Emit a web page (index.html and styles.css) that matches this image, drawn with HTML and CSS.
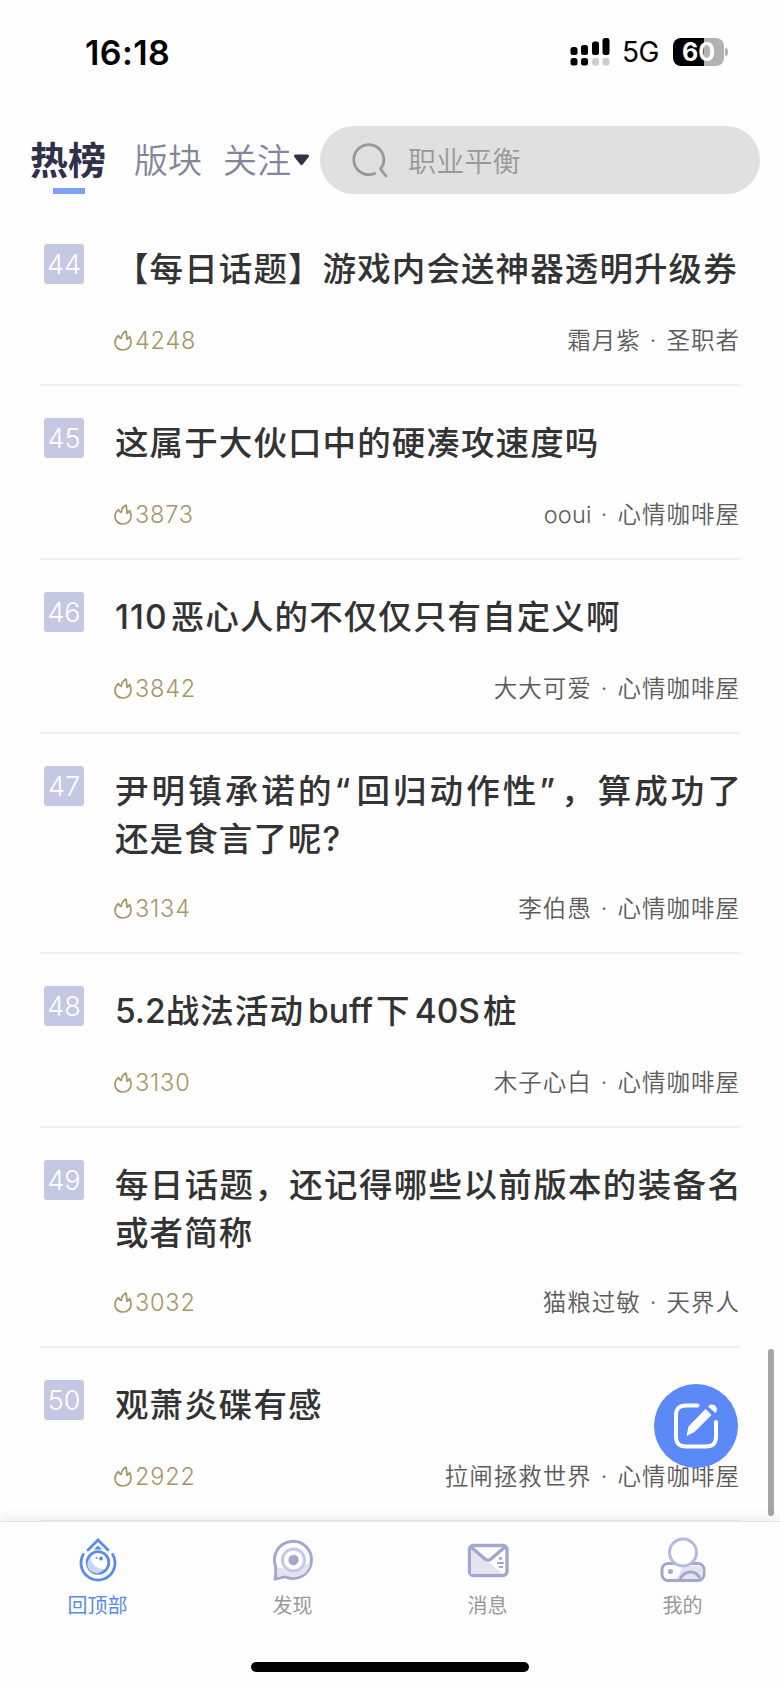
FILE: index.html
```html
<!DOCTYPE html>
<html lang="zh-CN">

<head>
    <meta charset="UTF-8">
    <meta name="viewport" content="width=device-width, initial-scale=1.0">
    <title>热榜</title>
    <link rel="stylesheet" href="styles.css">
</head>

<body>
    <svg class="defs" width="0" height="0">
        <symbol id="flame" viewBox="0 0 18 21">
            <path d="M4.500 5.500C1.500 8 1 10.500 1 13c0 4 3.500 7 8 7s8-3 8-7.500c0-2-.3-4-1.200-6-.8 1.500-1.500 2-2.800 2.800C13 6 12.500 3.500 12 1 9 2.500 7.500 5 7.300 8.500 5.800 8 4.800 7 4.500 5.500z" fill="none" stroke="currentColor" stroke-width="1.700" stroke-linejoin="round" />
        </symbol>
    </svg>

    <div class="status">
        <div class="time">16:18</div>
        <div class="status-right">
            <svg class="signal" width="40" height="28" viewBox="0 0 40 28">
                <rect x="0.500" y="9" width="7" height="8" rx="2.500" />
                <rect x="11" y="7" width="7" height="10" rx="2.500" />
                <rect x="22" y="3.500" width="7" height="13.500" rx="2.500" />
                <rect x="32.500" y="0" width="7" height="17" rx="2.500" />
                <rect x="0.500" y="20" width="7" height="7.500" rx="2.500" />
                <rect x="11" y="20" width="7" height="7.500" rx="2.500" />
                <rect x="22" y="20" width="7" height="7.500" rx="2.500" fill="#ccc" />
                <rect x="32.500" y="20" width="7" height="7.500" rx="2.500" fill="#ccc" />
            </svg>
            <span class="network">5G</span>
            <span class="battery">60</span>
            <span class="battery-tip"></span>
        </div>
    </div>

    <div class="header">
        <div class="tab active">热榜</div>
        <div class="tab">版块</div>
        <div class="tab follow">关注</div>
        <svg class="caret" width="17" height="12" viewBox="0 0 17 12">
            <path d="M2.500 2h12L8.500 9.500z" fill="#303048" stroke="#303048" stroke-width="3" stroke-linejoin="round" />
        </svg>
        <div class="search">
            <svg width="36" height="37" viewBox="0 0 36 37">
                <path d="M22.500 31.500A15 15 0 1 1 28.500 27L34 34" fill="none" stroke="#999" stroke-width="2.800" stroke-linecap="round" stroke-linejoin="round" />
            </svg>
            <span>职业平衡</span>
        </div>
    </div>

    <div class="list">
        <div class="item">
            <div class="rank">44</div>
            <div class="content">
                <div class="title">【每日话题】游戏内会送神器透明升级券</div>
                <div class="meta">
                    <span class="heat"><svg><use href="#flame" /></svg>4248</span>
                    <span class="from">霜月紫 · 圣职者</span>
                </div>
            </div>
        </div>
        <div class="item">
            <div class="rank">45</div>
            <div class="content">
                <div class="title">这属于大伙口中的硬凑攻速度吗</div>
                <div class="meta">
                    <span class="heat"><svg><use href="#flame" /></svg>3873</span>
                    <span class="from"><span class="user">ooui</span> · 心情咖啡屋</span>
                </div>
            </div>
        </div>
        <div class="item">
            <div class="rank">46</div>
            <div class="content">
                <div class="title"><span class="num">110</span>恶心人的不仅仅只有自定义啊</div>
                <div class="meta">
                    <span class="heat"><svg><use href="#flame" /></svg>3842</span>
                    <span class="from">大大可爱 · 心情咖啡屋</span>
                </div>
            </div>
        </div>
        <div class="item">
            <div class="rank">47</div>
            <div class="content">
                <div class="title two-line">尹明镇承诺的<span class="quote">“</span>回归动作性<span class="quote">”</span>，算成功了还是食言了呢?</div>
                <div class="meta">
                    <span class="heat"><svg><use href="#flame" /></svg>3134</span>
                    <span class="from">李伯愚 · 心情咖啡屋</span>
                </div>
            </div>
        </div>
        <div class="item">
            <div class="rank">48</div>
            <div class="content">
                <div class="title"><span class="latin first">5.2</span>战法活动<span class="latin">buff</span>下<span class="latin">40S</span>桩</div>
                <div class="meta">
                    <span class="heat"><svg><use href="#flame" /></svg>3130</span>
                    <span class="from">木子心白 · 心情咖啡屋</span>
                </div>
            </div>
        </div>
        <div class="item">
            <div class="rank">49</div>
            <div class="content">
                <div class="title two-line">每日话题，还记得哪些以前版本的装备名或者简称</div>
                <div class="meta">
                    <span class="heat"><svg><use href="#flame" /></svg>3032</span>
                    <span class="from">猫粮过敏 · 天界人</span>
                </div>
            </div>
        </div>
        <div class="item">
            <div class="rank">50</div>
            <div class="content">
                <div class="title">观萧炎碟有感</div>
                <div class="meta">
                    <span class="heat"><svg><use href="#flame" /></svg>2922</span>
                    <span class="from">拉闸拯救世界 · 心情咖啡屋</span>
                </div>
            </div>
        </div>
    </div>

    <div class="post">
        <svg width="84" height="84" viewBox="0 0 84 84" fill="none" stroke="#fff" stroke-width="4" stroke-linecap="round">
            <path d="M43.500 21.500H32c-7 0-10 3-10 10v21c0 7 3 10 10 10h20c7 0 10-3 10-10V38" />
            <path d="M32.500 52l2-9.500 17-17.500 6 6L40.500 48z" fill="#fff" stroke="none" />
            <path d="M54 22.500c4.500-5.500 12 1 7.500 6.500z" fill="#fff" stroke="none" />
        </svg>
    </div>
    <div class="scrollbar"></div>

    <div class="tabbar">
        <div class="nav active">
            <svg width="48" height="48" viewBox="0 0 48 48" fill="none" stroke="#5b8bea" stroke-width="2.800" stroke-linecap="round">
                <path d="M14 14L24 4l10 10" />
                <path d="M9.300 18.500a17 17 0 1 0 29.400 0" />
                <path d="M20 13.500l4-4 4 4z" fill="#5b8bea" stroke="none" />
                <circle cx="24" cy="26.500" r="10.800" fill="#fff" />
                <path d="M17 21a9 9 0 1 0 13 12C22 33 17 28 17 21z" fill="#ccd5f5" stroke="none" />
                <circle cx="27" cy="22.500" r="1.900" fill="#5b8bea" stroke="none" />
                <circle cx="22.500" cy="22" r="1" fill="#5b8bea" stroke="none" />
            </svg>
            <span>回顶部</span>
        </div>
        <div class="nav">
            <svg width="48" height="48" viewBox="0 0 48 48" fill="none" stroke="#a2a8cd" stroke-width="3">
                <path d="M6 43c1.500-5 1.200-8 .5-13A18.500 18.500 0 1 1 17 41c-4-.5-6 1.500-11 2z" fill="#fff" stroke-linejoin="round" />
                <path d="M8 41V31c8 3 20 2 33-4-1 12-14 17-24 12-3 0-5 1.500-9 2z" fill="#e2e5ef" stroke="none" />
                <circle cx="24.500" cy="24" r="11" fill="#fff" stroke="#c3c9e9" />
                <circle cx="24.500" cy="24" r="5.200" fill="#a2a8cd" stroke="none" />
            </svg>
            <span>发现</span>
        </div>
        <div class="nav">
            <svg width="48" height="48" viewBox="0 0 48 48" fill="none" stroke="#a2a8cd" stroke-width="3.400">
                <rect x="5.500" y="9.500" width="37.500" height="30" rx="4" fill="#fff" />
                <path d="M7 12l16 13 16 13H7z" fill="#e2e5ef" stroke="none" />
                <path d="M7 11l14 12c2 1.500 4 1.500 6 0l14-12" />
                <circle cx="36.500" cy="22.500" r="1.700" fill="#a2a8cd" stroke="none" />
                <path d="M33 27h7M35 31h4" stroke-width="2" />
            </svg>
            <span>消息</span>
        </div>
        <div class="nav">
            <svg width="48" height="48" viewBox="0 0 48 48" fill="none" stroke="#a2a8cd" stroke-width="3">
                <rect x="3" y="27.500" width="42" height="17" rx="6" fill="#fff" />
                <path d="M22 30h17c3 0 4.500 1.500 4.500 4v5c0 3-1.500 4-4 4H16c4-3 6-7 6-13z" fill="#e2e5ef" stroke="none" />
                <path d="M21 43.500c4-9.500 16-10 20-1" />
                <circle cx="11.500" cy="35.500" r="2.500" fill="#a2a8cd" stroke="none" />
                <circle cx="24" cy="16.500" r="13.500" fill="#fff" stroke="#b4badf" />
            </svg>
            <span>我的</span>
        </div>
    </div>
    <div class="home-bar"></div>
</body>

</html>
```
FILE: styles.css
```css
* {
    box-sizing: border-box;
}

body {
    margin: 0;
    height: 1688px;
    overflow: hidden;
    background: #fefefe;
    font-family: Inter, "Noto Sans CJK SC", sans-serif;
    color: #333;
}

.defs {
    position: absolute;
}

.status {
    height: 104px;
    padding: 0 52px 0 85px;
    display: flex;
    align-items: center;
    justify-content: space-between;
    color: #000;
}

.time {
    font-size: 34px;
    font-weight: 600;
    letter-spacing: 0.4px;
}

.status-right {
    display: flex;
    align-items: center;
}

.network {
    margin: 0 14px 0 12px;
    font-size: 28px;
    letter-spacing: -0.5px;
}

.battery {
    width: 51px;
    height: 28px;
    border-radius: 8px;
    background: linear-gradient(to right, #000 61%, #b2b2b2 61%);
    color: #fff;
    font-size: 25px;
    font-weight: 700;
    line-height: 28px;
    text-align: center;
}

.battery-tip {
    width: 3px;
    height: 8px;
    margin-left: 1px;
    border-radius: 0 3px 3px 0;
    background: #b2b2b2;
}

.header {
    height: 112px;
    padding: 0 20px 0 30px;
    display: flex;
    align-items: center;
}

.tab {
    margin-right: 21px;
    padding-top: 1px;
    font-size: 34px;
    font-weight: 350;
    line-height: 48px;
    color: #83869a;
    white-space: nowrap;
}

.tab.active {
    position: relative;
    margin-right: 28px;
    padding-top: 0;
    font-size: 38px;
    font-weight: 700;
    color: #303048;
}

.tab.active::after {
    content: "";
    position: absolute;
    left: 23px;
    top: 52px;
    width: 32px;
    height: 6px;
    background: #7aa0f8;
}

.tab.follow {
    margin-right: 2px;
}

.caret {
    flex: none;
}

.search {
    flex: 1;
    height: 68px;
    margin-left: 10px;
    padding-left: 32px;
    border-radius: 34px;
    background: #e0e0e0;
    display: flex;
    align-items: center;
    gap: 20px;
    font-size: 28px;
    font-weight: 350;
    letter-spacing: 0.2px;
    color: #999;
}

.list {
    padding: 0 40px 0 41px;
}

.item {
    display: flex;
    padding: 28px 0 27px 3px;
    border-bottom: 2px solid #efefef;
    margin-bottom: 4px;
}

.rank {
    flex: none;
    width: 40px;
    height: 40px;
    border-radius: 3px;
    background: #c5c8e3;
    color: #fff;
    font-size: 27px;
    font-weight: 350;
    line-height: 41px;
    text-align: center;
}

.content {
    flex: 1;
    margin-left: 31px;
}

.title {
    margin-right: -2px;
    padding-top: 1px;
    font-size: 33.5px;
    font-weight: 500;
    letter-spacing: 1.1px;
    line-height: 48px;
    text-align: justify;
}

.title.two-line {
    margin-bottom: -2px;
}

.title .latin {
    margin: 0 3px 0 4px;
    letter-spacing: 0;
}

.title .first {
    margin: 0;
}

.title .num {
    margin-right: 3px;
}

.title .quote {
    letter-spacing: 4px;
}

.meta {
    display: flex;
    align-items: center;
    justify-content: space-between;
    height: 36px;
    margin-top: 28px;
    font-size: 23.5px;
    font-weight: 350;
    letter-spacing: 1px;
}

.heat {
    display: flex;
    align-items: center;
    padding-top: 2px;
    color: #a4966a;
    letter-spacing: 0.8px;
}

.heat svg {
    width: 18px;
    height: 21px;
    margin: 0 3px 0 -1px;
}

.from {
    color: #5c5c5c;
    word-spacing: 1.5px;
}

.user {
    letter-spacing: 0.2px;
}

.post {
    position: absolute;
    left: 654px;
    top: 1384px;
    width: 84px;
    height: 84px;
    border-radius: 50%;
    background: #5b89f7;
}

.scrollbar {
    position: absolute;
    right: 6px;
    top: 1349px;
    width: 6px;
    height: 167px;
    border-radius: 3px;
    background: #a5a5a5;
}

.tabbar {
    position: absolute;
    left: 0;
    bottom: 0;
    width: 100%;
    height: 167px;
    padding-top: 14px;
    display: flex;
    background: #fdfdfd;
    border-top: 1px solid #e5e5e5;
    box-shadow: 0 -3px 12px rgba(0, 0, 0, 0.08);
}

.nav {
    flex: 1;
    display: flex;
    flex-direction: column;
    align-items: center;
    font-size: 20px;
    line-height: 30px;
    color: #999;
}

.nav span {
    margin-top: 7px;
}

.nav.active {
    color: #5b8bea;
}

.home-bar {
    position: absolute;
    left: 251px;
    bottom: 16px;
    width: 278px;
    height: 10px;
    border-radius: 5px;
    background: #000;
}
```
